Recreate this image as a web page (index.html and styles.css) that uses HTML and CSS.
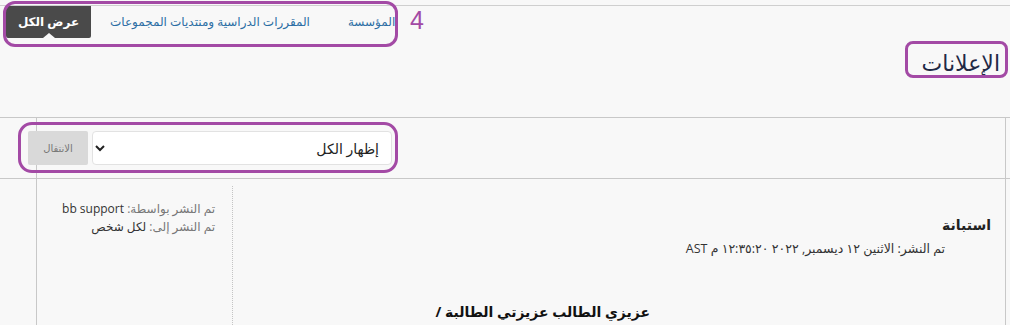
FILE: index.html
```html
<!DOCTYPE html>
<html dir="rtl" lang="ar">
<head>
  <title>الإعلانات</title>
  <meta charset="UTF-8">
  <link rel="stylesheet" href="styles.css">
</head>
<body>
  <div class="top-strip"></div>

  <!-- شريط التبويبات -->
  <div class="nav-row">
    <ul class="nav-tabs">
      <li class="nav-tab"><a href="#">المؤسسة</a></li>
      <li class="nav-tab"><a href="#">المقررات الدراسية ومنتديات المجموعات</a></li>
      <li class="nav-tab active"><a href="#">عرض الكل</a></li>
    </ul>
  </div>

  <div class="page-title">
    <h1>الإعلانات</h1>
  </div>

  <!-- شريط التصفية -->
  <div class="toolbar-row">
    <form class="filter-form">
      <select class="filter-select">
        <option>إظهار الكل</option>
      </select>
      <button type="button" class="btn-go">الانتقال</button>
    </form>
  </div>

  <div class="content-row">
    <div class="announcement">
      <div class="ann-main">
        <h3 class="ann-title">استبانة</h3>
        <div class="ann-date">تم النشر: الاثنين ١٢ ديسمبر, ٢٠٢٢ ١٢:٣٥:٢٠ م AST</div>
        <p class="ann-body">عزيزي الطالب عزيزتي الطالبة /</p>
      </div>
      <div class="ann-meta">
        <div class="meta-box">
          <p><span class="meta-label">تم النشر بواسطة:</span> bb support</p>
          <p><span class="meta-label">تم النشر إلى:</span> لكل شخص</p>
        </div>
      </div>
    </div>
  </div>

  <!-- علامات التوضيح -->
  <div class="mark mark-nav"></div>
  <div class="mark mark-title"></div>
  <div class="mark mark-filter"></div>
  <span class="mark-num">4</span>
</body>
</html>
```

FILE: styles.css
```css
body {
  margin: 0;
  background: #f8f8f8;
  color: #333;
  font-family: "Open Sans", "DejaVu Sans", sans-serif;
  font-size: 13px;
  position: relative;
  height: 325px;
  overflow: hidden;
}

.top-strip {
  height: 5px;
  border-bottom: 1px solid #cfcfcf;
}

.nav-row {
  height: 36px;
}

.nav-tabs {
  display: flex;
  justify-content: flex-end;
  margin: 0;
  padding: 0 0 0 6px;
  list-style: none;
}

.nav-tab a {
  display: block;
  height: 32px;
  line-height: 31px;
  padding: 0 19px;
  color: #2b6ea4;
  text-decoration: none;
  font-size: 12px;
}

.nav-tab.active a {
  position: relative;
  width: 85px;
  padding: 0;
  text-align: center;
  background: #4a4a4a;
  color: #fff;
  font-weight: bold;
  border-radius: 0 0 2px 2px;
}

.nav-tab.active a::after {
  content: '';
  position: absolute;
  bottom: 0;
  left: 50%;
  margin-left: -6px;
  border: 6px solid transparent;
  border-bottom: 5px solid #f8f8f8;
  border-top: none;
}

.page-title {
  height: 70px;
  padding: 5px 10px 0 0;
}

.page-title h1 {
  margin: 0;
  font-size: 22px;
  font-weight: normal;
  line-height: 30px;
  color: #1f2945;
}

.toolbar-row {
  height: 60px;
  border-top: 1px solid #c8c8c8;
  border-bottom: 1px solid #c8c8c8;
  background:
    linear-gradient(#c8c8c8, #c8c8c8) 36px 0 / 1px 100% no-repeat,
    linear-gradient(#c8c8c8, #c8c8c8) 1005px 0 / 1px 100% no-repeat;
}

.filter-form {
  display: flex;
  gap: 4px;
  margin: 13px 618px 0 28px;
}

.filter-select {
  flex: 1;
  height: 34px;
  padding: 0 8px;
  border: 1px solid #e2e2e2;
  border-radius: 4px;
  background: #fff;
  font-family: "Open Sans", "DejaVu Sans", sans-serif;
  font-size: 14px;
  color: #222;
}

.btn-go {
  width: 60px;
  height: 34px;
  border: none;
  border-radius: 2px;
  background: #d9d9d9;
  color: #777;
  font-family: "Open Sans", "DejaVu Sans", sans-serif;
  font-size: 10px;
}

.content-row {
  height: 146px;
  margin: 0 4px 0 36px;
  border-left: 1px solid #c8c8c8;
  border-right: 1px solid #c8c8c8;
}

.announcement {
  display: flex;
  height: 100%;
}

.ann-main {
  flex: 1;
  padding: 37px 14px 0 0;
}

.ann-title {
  margin: 0;
  font-size: 14px;
  line-height: 18px;
  color: #222;
}

.ann-date {
  margin: 6px 46px 0 0;
  font-size: 12.5px;
  line-height: 18px;
  color: #333;
}

.ann-body {
  margin: 44px 341px 0 0;
  font-size: 14px;
  line-height: 20px;
  font-weight: bold;
  white-space: nowrap;
  color: #111;
}

.ann-meta {
  width: 196px;
  padding-top: 7px;
}

.meta-box {
  height: 100%;
  border-right: 1px dotted #c4c4c4;
  padding: 14px 17px 0 0;
}

.meta-box p {
  margin: 0;
  font-size: 12px;
  line-height: 18px;
  color: #333;
}

.meta-label {
  color: #777;
}

/* علامات التوضيح البنفسجية */
.mark {
  position: absolute;
  border: 3px solid #a34aa5;
  border-radius: 12px;
}

.mark-nav {
  left: 3px;
  top: 1px;
  width: 389px;
  height: 40px;
}

.mark-title {
  left: 905px;
  top: 41px;
  width: 97px;
  height: 31px;
  border-radius: 8px;
}

.mark-filter {
  left: 18px;
  top: 122px;
  width: 374px;
  height: 45px;
  border-radius: 14px;
}

.mark-num {
  position: absolute;
  left: 410px;
  top: 6px;
  font-family: "Liberation Sans", sans-serif;
  font-size: 25px;
  color: #a34aa5;
}
```
